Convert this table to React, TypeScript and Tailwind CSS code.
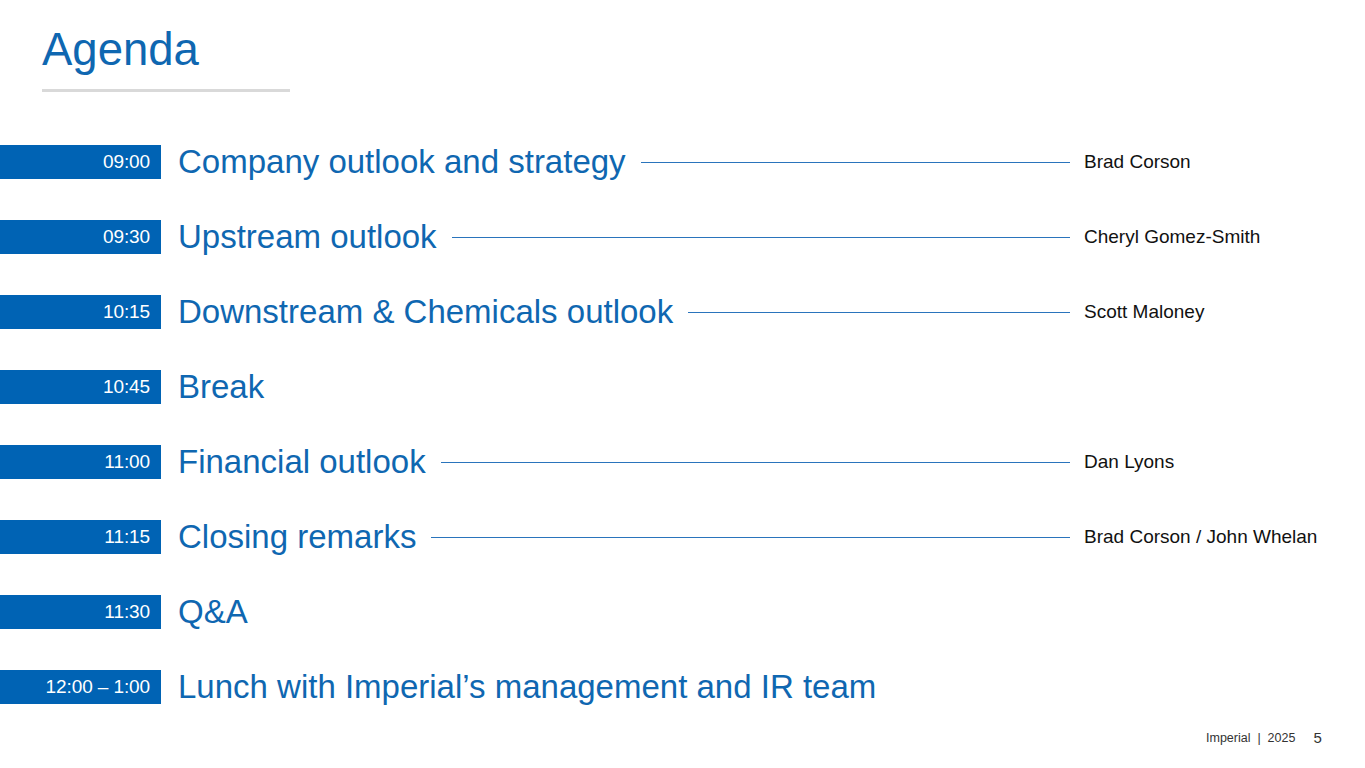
const rows = [
  { time: '09:00', title: 'Company outlook and strategy', speaker: 'Brad Corson' },
  { time: '09:30', title: 'Upstream outlook', speaker: 'Cheryl Gomez-Smith' },
  { time: '10:15', title: 'Downstream & Chemicals outlook', speaker: 'Scott Maloney' },
  { time: '10:45', title: 'Break', speaker: '' },
  { time: '11:00', title: 'Financial outlook', speaker: 'Dan Lyons' },
  { time: '11:15', title: 'Closing remarks', speaker: 'Brad Corson / John Whelan' },
  { time: '11:30', title: 'Q&A', speaker: '' },
  { time: '12:00 – 1:00', title: 'Lunch with Imperial’s management and IR team', speaker: '' },
]

export default function App() {
  return (
    <div className="relative w-[1365px] h-[768px] bg-white overflow-hidden font-['Liberation_Sans',Arial,sans-serif]">
      <div className="pl-[42px] pt-[22px]">
        <h1 className="text-[45.5px] leading-[56px] text-[#0f67b1]">Agenda</h1>
        <div className="mt-[11px] w-[248px] h-[3px] bg-[#d9d9d9]" />
      </div>

      <div className="mt-[53px] flex flex-col gap-[41px]">
        {rows.map((r) => (
          <div key={r.time} className="flex items-center h-[34px]">
            <div className="w-[161px] h-[34px] shrink-0 bg-[#0063b4] flex items-center justify-end pr-[11px] text-[19px] text-white tracking-[-0.1px]">
              {r.time}
            </div>
            <div className="ml-[17px] text-[33px] leading-[34px] text-[#0f67b1] whitespace-nowrap">
              {r.title}
            </div>
            <div className="flex-1 ml-[15px] mr-[14px] h-[1px]">
              {r.speaker && <div className="h-[1px] bg-[#2a74bc]" />}
            </div>
            <div className="w-[281px] shrink-0 text-[19px] text-[#111]">{r.speaker}</div>
          </div>
        ))}
      </div>

      <div className="absolute left-[1206px] top-[727px] flex items-center text-[#333]">
        <span className="text-[12.5px]">Imperial &nbsp;|&nbsp; 2025</span>
        <span className="ml-[18px] text-[15px]">5</span>
      </div>
    </div>
  )
}
